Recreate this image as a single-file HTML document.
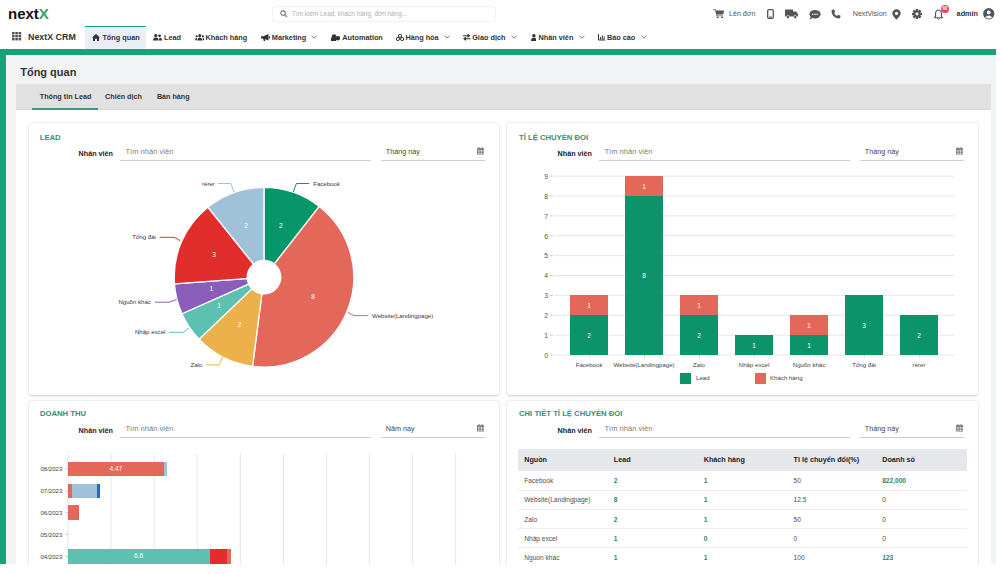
<!DOCTYPE html><html><head><meta charset="utf-8"><style>
html,body{margin:0;padding:0;}
body{width:1000px;height:574px;overflow:hidden;position:relative;background:#fff;font-family:"Liberation Sans",sans-serif;}
.t{position:absolute;white-space:nowrap;line-height:1;}
.r{position:absolute;}
</style></head><body>
<div class="t " style="left:8.00px;top:6.10px;font-size:15px;font-weight:700;color:#111;">next<span style="color:#389e6c">X</span></div>
<div class="r" style="left:271.5px;top:6px;width:224px;height:16px;background:#fff;border:1px solid #f3f3f3;border-radius:3px;box-sizing:border-box;box-shadow:0 0 1px rgba(0,0,0,0.05);"></div>
<svg class="r" style="left:280.3px;top:9.6px" width="7.6" height="7.6" viewBox="0 0 10 10"><circle cx="4" cy="4" r="3" fill="none" stroke="#8a8a8a" stroke-width="1.7"/><path d="M6.2 6.2 L9.2 9.2" stroke="#8a8a8a" stroke-width="2"/></svg>
<div class="t " style="left:292.00px;top:10.78px;font-size:6.4px;font-weight:400;color:#b0b0b0;">Tìm kiếm Lead, khách hàng, đơn hàng...</div>
<svg class="r" style="left:712.5px;top:8.8px" width="11.5" height="9.5" viewBox="0 0 12 10"><path d="M0 0.3 H2.6 L3 1.6 H11.8 L10.6 5.8 H4.2 L4.5 6.8 H10.6 V7.6 H3.8 L2 1.1 H0Z" fill="#555"/><circle cx="4.8" cy="8.9" r="1.05" fill="#555"/><circle cx="9.6" cy="8.9" r="1.05" fill="#555"/></svg>
<div class="t " style="left:729.00px;top:10.99px;font-size:7.1px;font-weight:400;color:#555;">Lên đơn</div>
<svg class="r" style="left:767px;top:8.5px" width="7" height="10" viewBox="0 0 7 10"><rect x="0.7" y="0.7" width="5.6" height="8.6" rx="1" fill="none" stroke="#555" stroke-width="1.3"/><rect x="2" y="7.6" width="3" height="1" fill="#555"/></svg>
<svg class="r" style="left:784.5px;top:9px" width="13" height="10" viewBox="0 0 13 10"><path d="M0 0.5 H8 V7.5 H0 Z M8 2.5 H11 L13 5 V7.5 H8 Z" fill="#555"/><circle cx="3" cy="8" r="1.6" fill="#555" stroke="#fff" stroke-width="0.6"/><circle cx="10.2" cy="8" r="1.6" fill="#555" stroke="#fff" stroke-width="0.6"/></svg>
<svg class="r" style="left:808.5px;top:9.5px" width="12" height="10" viewBox="0 0 12 10"><ellipse cx="6" cy="4.3" rx="5.6" ry="4.2" fill="#555"/><path d="M1.5 7 L0.5 9.8 L4 7.8Z" fill="#555"/><circle cx="3.8" cy="4.3" r="0.8" fill="#fff"/><circle cx="6" cy="4.3" r="0.8" fill="#fff"/><circle cx="8.2" cy="4.3" r="0.8" fill="#fff"/></svg>
<svg class="r" style="left:831px;top:8.5px" width="10" height="10" viewBox="0 0 10 10"><path d="M1.2 0.8 L3.2 0.5 L4.2 3 L3 4 Q4 6.2 6 7 L7 5.8 L9.5 6.8 L9.2 8.8 Q8.5 9.7 7 9.5 Q1 8 0.5 2.5 Q0.5 1.2 1.2 0.8Z" fill="#555"/></svg>
<div class="t " style="left:852.80px;top:10.99px;font-size:7.1px;font-weight:400;color:#555;">NextVision</div>
<svg class="r" style="left:891.5px;top:8.5px" width="9" height="11" viewBox="0 0 9 11"><path d="M4.5 0.3 A4.2 4.2 0 0 1 8.7 4.5 Q8.7 6.5 4.5 10.8 Q0.3 6.5 0.3 4.5 A4.2 4.2 0 0 1 4.5 0.3Z" fill="#555"/><circle cx="4.5" cy="4.4" r="1.6" fill="#fff"/></svg>
<svg class="r" style="left:912px;top:9px" width="10" height="10" viewBox="-5 -5 10 10"><g fill="#555"><rect x="-1.2" y="-5" width="2.4" height="3" transform="rotate(0)"/><rect x="-1.2" y="-5" width="2.4" height="3" transform="rotate(45)"/><rect x="-1.2" y="-5" width="2.4" height="3" transform="rotate(90)"/><rect x="-1.2" y="-5" width="2.4" height="3" transform="rotate(135)"/><rect x="-1.2" y="-5" width="2.4" height="3" transform="rotate(180)"/><rect x="-1.2" y="-5" width="2.4" height="3" transform="rotate(225)"/><rect x="-1.2" y="-5" width="2.4" height="3" transform="rotate(270)"/><rect x="-1.2" y="-5" width="2.4" height="3" transform="rotate(315)"/><circle r="3.4"/></g><circle r="1.4" fill="#fff"/></svg>
<svg class="r" style="left:933.5px;top:8.5px" width="9" height="11" viewBox="0 0 9 11"><path d="M4.5 1 Q7.5 1.3 7.5 5 V7.5 L8.6 8.8 H0.4 L1.5 7.5 V5 Q1.5 1.3 4.5 1Z" fill="none" stroke="#555" stroke-width="1.1"/><path d="M3.3 9.6 Q4.5 11 5.7 9.6" fill="none" stroke="#555" stroke-width="1"/></svg>
<div class="r" style="left:941px;top:5.4px;width:8px;height:8px;border-radius:50%;background:#e8454c;color:#fff;font-size:4.5px;line-height:8px;text-align:center;font-weight:700">60</div>
<div class="t " style="left:956.60px;top:10.12px;font-size:7.3px;font-weight:700;color:#333;">admin</div>
<svg class="r" style="left:983px;top:8.3px" width="11.5" height="11.5" viewBox="0 0 12 12"><circle cx="6" cy="6" r="5.9" fill="#555"/><circle cx="6" cy="4.6" r="2" fill="#fff"/><path d="M2.3 9.6 Q6 6 9.7 9.6 Q6 12.3 2.3 9.6Z" fill="#fff"/></svg>
<svg class="r" style="left:12px;top:32.3px" width="9.5" height="8.5" viewBox="0 0 9.5 8.5"><g fill="#555"><rect x="0.0" y="0" width="2.6" height="2.4"/><rect x="0.0" y="3" width="2.6" height="2.4"/><rect x="0.0" y="6" width="2.6" height="2.4"/><rect x="3.3" y="0" width="2.6" height="2.4"/><rect x="3.3" y="3" width="2.6" height="2.4"/><rect x="3.3" y="6" width="2.6" height="2.4"/><rect x="6.6" y="0" width="2.6" height="2.4"/><rect x="6.6" y="3" width="2.6" height="2.4"/><rect x="6.6" y="6" width="2.6" height="2.4"/></g></svg>
<div class="t " style="left:28.00px;top:32.67px;font-size:8.9px;font-weight:700;color:#333;">NextX CRM</div>
<div class="r" style="left:84.8px;top:25.5px;width:61.2px;height:23.5px;background:#e9eff7;"></div>
<div class="r" style="left:84.8px;top:25.5px;width:61.2px;height:1.8px;background:#16a27b;"></div>
<svg class="r" style="left:92px;top:34px" width="8" height="7" viewBox="0 0 8 7"><path d="M0 3.6 L4 0 L8 3.6 L7 3.6 V7 H5 V4.8 H3 V7 H1 V3.6Z" fill="#333"/></svg>
<div class="t " style="left:102.40px;top:34.12px;font-size:7.3px;font-weight:700;color:#333;">Tổng quan</div>
<svg class="r" style="left:153px;top:34px" width="9" height="6.5" viewBox="0 0 9 6.5"><circle cx="2.8" cy="1.6" r="1.6" fill="#333"/><path d="M0 6.5 Q0 3.6 2.8 3.6 Q5.6 3.6 5.6 6.5Z" fill="#333"/><circle cx="6.6" cy="1.8" r="1.4" fill="#333"/><path d="M6 6.5 Q6 3.8 6.8 3.8 Q9 3.8 9 6.5Z" fill="#333"/></svg>
<div class="t " style="left:164.00px;top:34.12px;font-size:7.3px;font-weight:700;color:#333;">Lead</div>
<svg class="r" style="left:194.6px;top:34px" width="9.5" height="6.5" viewBox="0 0 9.5 6.5"><circle cx="4.75" cy="1.6" r="1.5" fill="#333"/><path d="M2.4 6.5 Q2.4 3.5 4.75 3.5 Q7.1 3.5 7.1 6.5Z" fill="#333"/><circle cx="1.6" cy="2.3" r="1.1" fill="#333"/><path d="M0 6.2 Q0 4 1.9 4 V6.2Z" fill="#333"/><circle cx="7.9" cy="2.3" r="1.1" fill="#333"/><path d="M9.5 6.2 Q9.5 4 7.6 4 V6.2Z" fill="#333"/></svg>
<div class="t " style="left:205.50px;top:34.12px;font-size:7.3px;font-weight:700;color:#333;">Khách hàng</div>
<svg class="r" style="left:261px;top:33.5px" width="9" height="7.5" viewBox="0 0 9 7.5"><path d="M0 2.3 H2.5 L7.5 0 V6.5 L2.5 4.5 H0Z M2 4.6 L3 7.5 H4.3 L3.8 4.8Z" fill="#333"/><rect x="8" y="2.3" width="1" height="2.2" fill="#333"/></svg>
<div class="t " style="left:271.80px;top:34.12px;font-size:7.3px;font-weight:700;color:#333;">Marketing</div>
<svg class="r" style="left:311.2px;top:35.3px" width="6" height="4" viewBox="0 0 6 4"><path d="M0.5 0.7 L3 3.2 L5.5 0.7" fill="none" stroke="#666" stroke-width="0.9"/></svg>
<svg class="r" style="left:330.6px;top:33.8px" width="9.6" height="7" viewBox="0 0 9.6 7"><circle cx="3" cy="2.5" r="2.2" fill="#333"/><circle cx="6.8" cy="4.2" r="2.3" fill="#333"/><rect x="0" y="3.5" width="5" height="3.5" fill="#333"/></svg>
<div class="t " style="left:342.30px;top:34.12px;font-size:7.3px;font-weight:700;color:#333;">Automation</div>
<svg class="r" style="left:396.3px;top:33.8px" width="8" height="7" viewBox="0 0 8 7"><circle cx="4" cy="1.8" r="1.6" fill="none" stroke="#333" stroke-width="1"/><circle cx="1.9" cy="5" r="1.6" fill="none" stroke="#333" stroke-width="1"/><circle cx="6.1" cy="5" r="1.6" fill="none" stroke="#333" stroke-width="1"/></svg>
<div class="t " style="left:405.40px;top:34.12px;font-size:7.3px;font-weight:700;color:#333;">Hàng hóa</div>
<svg class="r" style="left:444px;top:35.3px" width="6" height="4" viewBox="0 0 6 4"><path d="M0.5 0.7 L3 3.2 L5.5 0.7" fill="none" stroke="#666" stroke-width="0.9"/></svg>
<svg class="r" style="left:463px;top:34px" width="7.5" height="6.5" viewBox="0 0 7.5 6.5"><path d="M0 1.8 H6 M4.5 0.3 L6.5 1.8 L4.5 3.3 M7.5 4.7 H1.5 M3 3.2 L1 4.7 L3 6.2" fill="none" stroke="#333" stroke-width="1.1"/></svg>
<div class="t " style="left:472.20px;top:34.12px;font-size:7.3px;font-weight:700;color:#333;">Giao dịch</div>
<svg class="r" style="left:511px;top:35.3px" width="6" height="4" viewBox="0 0 6 4"><path d="M0.5 0.7 L3 3.2 L5.5 0.7" fill="none" stroke="#666" stroke-width="0.9"/></svg>
<svg class="r" style="left:530.7px;top:33.6px" width="5.8" height="7" viewBox="0 0 5.8 7"><circle cx="2.9" cy="1.7" r="1.7" fill="#333"/><path d="M0 7 Q0 3.8 2.9 3.8 Q5.8 3.8 5.8 7Z" fill="#333"/></svg>
<div class="t " style="left:538.50px;top:34.12px;font-size:7.3px;font-weight:700;color:#333;">Nhân viên</div>
<svg class="r" style="left:578.8px;top:35.3px" width="6" height="4" viewBox="0 0 6 4"><path d="M0.5 0.7 L3 3.2 L5.5 0.7" fill="none" stroke="#666" stroke-width="0.9"/></svg>
<svg class="r" style="left:597.8px;top:34px" width="7.5" height="6.5" viewBox="0 0 7.5 6.5"><path d="M0.5 0 V6 H7.5" fill="none" stroke="#333" stroke-width="1"/><rect x="2" y="3" width="1" height="2.5" fill="#333"/><rect x="3.8" y="1.5" width="1" height="4" fill="#333"/><rect x="5.6" y="2.5" width="1" height="3" fill="#333"/></svg>
<div class="t " style="left:606.90px;top:34.12px;font-size:7.3px;font-weight:700;color:#333;">Báo cáo</div>
<svg class="r" style="left:640.5px;top:35.3px" width="6" height="4" viewBox="0 0 6 4"><path d="M0.5 0.7 L3 3.2 L5.5 0.7" fill="none" stroke="#666" stroke-width="0.9"/></svg>
<div class="r" style="left:0px;top:48.8px;width:996px;height:6px;background:#16a27b;"></div>
<div class="r" style="left:0px;top:48.8px;width:5.5px;height:515.4px;background:#16a27b;"></div>
<div class="r" style="left:5.5px;top:54.8px;width:491px;height:509.4px;background:#f2f3f5;border-top-left-radius:6px;width:990.9px"></div>
<div class="t " style="left:20.20px;top:67.49px;font-size:11px;font-weight:700;color:#333;">Tổng quan</div>
<div class="r" style="left:15.7px;top:84.4px;width:975px;height:25.6px;background:#e1e1e1;box-shadow:inset 0 -1.5px 1px rgba(0,0,0,0.03)"></div>
<div class="t " style="left:39.80px;top:93.31px;font-size:7.2px;font-weight:700;color:#333;">Thông tin Lead</div>
<div class="t " style="left:105.10px;top:93.31px;font-size:7.2px;font-weight:700;color:#333;">Chiến dịch</div>
<div class="t " style="left:156.90px;top:93.31px;font-size:7.2px;font-weight:700;color:#333;">Bán hàng</div>
<div class="r" style="left:32px;top:108.3px;width:66px;height:1.7px;background:#3a9882;"></div>
<div class="r" style="left:15.7px;top:110px;width:975px;height:454.2px;background:#fff;"></div>
<div class="r" style="left:28.5px;top:123.3px;width:470.5px;height:271.9px;background:#fff;border-radius:3px;box-shadow:0 0.6px 2.5px rgba(0,0,0,0.22);"></div>
<div class="r" style="left:507.4px;top:123.3px;width:470.6px;height:271.9px;background:#fff;border-radius:3px;box-shadow:0 0.6px 2.5px rgba(0,0,0,0.22);"></div>
<div class="r" style="left:28.5px;top:400.5px;width:470.5px;height:200px;background:#fff;border-radius:3px;box-shadow:0 0.6px 2.5px rgba(0,0,0,0.22);"></div>
<div class="r" style="left:507.4px;top:400.5px;width:470.6px;height:200px;background:#fff;border-radius:3px;box-shadow:0 0.6px 2.5px rgba(0,0,0,0.22);"></div>
<div class="t " style="left:39.70px;top:133.78px;font-size:7.7px;font-weight:700;color:#338f74;">LEAD</div>
<div class="t " style="left:519.00px;top:133.78px;font-size:7.7px;font-weight:700;color:#338f74;">TỈ LỆ CHUYỂN ĐỔI</div>
<div class="t " style="left:39.90px;top:410.28px;font-size:7.7px;font-weight:700;color:#338f74;">DOANH THU</div>
<div class="t " style="left:519.00px;top:410.28px;font-size:7.7px;font-weight:700;color:#338f74;">CHI TIẾT TỈ LỆ CHUYỂN ĐỔI</div>
<div class="t " style="left:78.60px;top:150.31px;font-size:7.2px;font-weight:700;color:#222;">Nhân viên</div>
<div class="t " style="left:125.40px;top:147.77px;font-size:7.6px;font-weight:400;color:#7d7d7d;">Tìm nhân viên</div>
<div class="r" style="left:119.8px;top:159.6px;width:251.4px;height:0.9px;background:#cfcfcf;"></div>
<div class="t " style="left:385.80px;top:147.81px;font-size:7.2px;font-weight:400;color:#444;">Tháng này</div>
<div class="r" style="left:381px;top:159.6px;width:103.5px;height:0.9px;background:#cfcfcf;"></div>
<svg class="r" style="left:477px;top:147px" width="7" height="7.5" viewBox="0 0 7 7.5"><path d="M0 1.2 H7 V7.5 H0Z" fill="#777"/><rect x="1.5" y="0" width="1" height="1.5" fill="#777"/><rect x="4.5" y="0" width="1" height="1.5" fill="#777"/><g fill="#fff"><rect x="0.8" y="2.9" width="1" height="0.9"/><rect x="0.8" y="4.4" width="1" height="0.9"/><rect x="0.8" y="5.9" width="1" height="0.9"/><rect x="2.4000000000000004" y="2.9" width="1" height="0.9"/><rect x="2.4000000000000004" y="4.4" width="1" height="0.9"/><rect x="2.4000000000000004" y="5.9" width="1" height="0.9"/><rect x="4.0" y="2.9" width="1" height="0.9"/><rect x="4.0" y="4.4" width="1" height="0.9"/><rect x="4.0" y="5.9" width="1" height="0.9"/><rect x="5.6000000000000005" y="2.9" width="1" height="0.9"/><rect x="5.6000000000000005" y="4.4" width="1" height="0.9"/><rect x="5.6000000000000005" y="5.9" width="1" height="0.9"/></g></svg>
<div class="t " style="left:557.60px;top:150.31px;font-size:7.2px;font-weight:700;color:#222;">Nhân viên</div>
<div class="t " style="left:604.40px;top:147.77px;font-size:7.6px;font-weight:400;color:#7d7d7d;">Tìm nhân viên</div>
<div class="r" style="left:598.8px;top:159.6px;width:251.4px;height:0.9px;background:#cfcfcf;"></div>
<div class="t " style="left:864.80px;top:147.81px;font-size:7.2px;font-weight:400;color:#444;">Tháng này</div>
<div class="r" style="left:860px;top:159.6px;width:103.5px;height:0.9px;background:#cfcfcf;"></div>
<svg class="r" style="left:956px;top:147px" width="7" height="7.5" viewBox="0 0 7 7.5"><path d="M0 1.2 H7 V7.5 H0Z" fill="#777"/><rect x="1.5" y="0" width="1" height="1.5" fill="#777"/><rect x="4.5" y="0" width="1" height="1.5" fill="#777"/><g fill="#fff"><rect x="0.8" y="2.9" width="1" height="0.9"/><rect x="0.8" y="4.4" width="1" height="0.9"/><rect x="0.8" y="5.9" width="1" height="0.9"/><rect x="2.4000000000000004" y="2.9" width="1" height="0.9"/><rect x="2.4000000000000004" y="4.4" width="1" height="0.9"/><rect x="2.4000000000000004" y="5.9" width="1" height="0.9"/><rect x="4.0" y="2.9" width="1" height="0.9"/><rect x="4.0" y="4.4" width="1" height="0.9"/><rect x="4.0" y="5.9" width="1" height="0.9"/><rect x="5.6000000000000005" y="2.9" width="1" height="0.9"/><rect x="5.6000000000000005" y="4.4" width="1" height="0.9"/><rect x="5.6000000000000005" y="5.9" width="1" height="0.9"/></g></svg>
<div class="t " style="left:78.60px;top:427.31px;font-size:7.2px;font-weight:700;color:#222;">Nhân viên</div>
<div class="t " style="left:125.40px;top:424.77px;font-size:7.6px;font-weight:400;color:#7d7d7d;">Tìm nhân viên</div>
<div class="r" style="left:119.8px;top:436.6px;width:251.4px;height:0.9px;background:#cfcfcf;"></div>
<div class="t " style="left:385.80px;top:424.81px;font-size:7.2px;font-weight:400;color:#444;">Năm nay</div>
<div class="r" style="left:381px;top:436.6px;width:103.5px;height:0.9px;background:#cfcfcf;"></div>
<svg class="r" style="left:477px;top:424px" width="7" height="7.5" viewBox="0 0 7 7.5"><path d="M0 1.2 H7 V7.5 H0Z" fill="#777"/><rect x="1.5" y="0" width="1" height="1.5" fill="#777"/><rect x="4.5" y="0" width="1" height="1.5" fill="#777"/><g fill="#fff"><rect x="0.8" y="2.9" width="1" height="0.9"/><rect x="0.8" y="4.4" width="1" height="0.9"/><rect x="0.8" y="5.9" width="1" height="0.9"/><rect x="2.4000000000000004" y="2.9" width="1" height="0.9"/><rect x="2.4000000000000004" y="4.4" width="1" height="0.9"/><rect x="2.4000000000000004" y="5.9" width="1" height="0.9"/><rect x="4.0" y="2.9" width="1" height="0.9"/><rect x="4.0" y="4.4" width="1" height="0.9"/><rect x="4.0" y="5.9" width="1" height="0.9"/><rect x="5.6000000000000005" y="2.9" width="1" height="0.9"/><rect x="5.6000000000000005" y="4.4" width="1" height="0.9"/><rect x="5.6000000000000005" y="5.9" width="1" height="0.9"/></g></svg>
<div class="t " style="left:557.60px;top:427.31px;font-size:7.2px;font-weight:700;color:#222;">Nhân viên</div>
<div class="t " style="left:604.40px;top:424.77px;font-size:7.6px;font-weight:400;color:#7d7d7d;">Tìm nhân viên</div>
<div class="r" style="left:598.8px;top:436.6px;width:251.4px;height:0.9px;background:#cfcfcf;"></div>
<div class="t " style="left:864.80px;top:424.81px;font-size:7.2px;font-weight:400;color:#444;">Tháng này</div>
<div class="r" style="left:860px;top:436.6px;width:103.5px;height:0.9px;background:#cfcfcf;"></div>
<svg class="r" style="left:956px;top:424px" width="7" height="7.5" viewBox="0 0 7 7.5"><path d="M0 1.2 H7 V7.5 H0Z" fill="#777"/><rect x="1.5" y="0" width="1" height="1.5" fill="#777"/><rect x="4.5" y="0" width="1" height="1.5" fill="#777"/><g fill="#fff"><rect x="0.8" y="2.9" width="1" height="0.9"/><rect x="0.8" y="4.4" width="1" height="0.9"/><rect x="0.8" y="5.9" width="1" height="0.9"/><rect x="2.4000000000000004" y="2.9" width="1" height="0.9"/><rect x="2.4000000000000004" y="4.4" width="1" height="0.9"/><rect x="2.4000000000000004" y="5.9" width="1" height="0.9"/><rect x="4.0" y="2.9" width="1" height="0.9"/><rect x="4.0" y="4.4" width="1" height="0.9"/><rect x="4.0" y="5.9" width="1" height="0.9"/><rect x="5.6000000000000005" y="2.9" width="1" height="0.9"/><rect x="5.6000000000000005" y="4.4" width="1" height="0.9"/><rect x="5.6000000000000005" y="5.9" width="1" height="0.9"/></g></svg>
<svg class="r" style="left:0;top:0" width="1000" height="574" viewBox="0 0 1000 574"><path d="M264.00 277.20 L264.00 187.40 A89.8 89.8 0 0 1 319.29 206.44 Z" fill="#079669" stroke="#fff" stroke-width="1.3" stroke-linejoin="round"/><path d="M264.00 277.20 L319.29 206.44 A89.8 89.8 0 0 1 252.59 366.27 Z" fill="#e4685a" stroke="#fff" stroke-width="1.3" stroke-linejoin="round"/><path d="M264.00 277.20 L252.59 366.27 A89.8 89.8 0 0 1 199.08 339.24 Z" fill="#ecb14b" stroke="#fff" stroke-width="1.3" stroke-linejoin="round"/><path d="M264.00 277.20 L199.08 339.24 A89.8 89.8 0 0 1 181.96 313.72 Z" fill="#5cc1b0" stroke="#fff" stroke-width="1.3" stroke-linejoin="round"/><path d="M264.00 277.20 L181.96 313.72 A89.8 89.8 0 0 1 174.44 283.78 Z" fill="#8a5dbb" stroke="#fff" stroke-width="1.3" stroke-linejoin="round"/><path d="M264.00 277.20 L174.44 283.78 A89.8 89.8 0 0 1 207.85 207.12 Z" fill="#e22d2d" stroke="#fff" stroke-width="1.3" stroke-linejoin="round"/><path d="M264.00 277.20 L207.85 207.12 A89.8 89.8 0 0 1 264.00 187.40 Z" fill="#9fc2d9" stroke="#fff" stroke-width="1.3" stroke-linejoin="round"/><circle cx="264.0" cy="277.2" r="17.4" fill="#fff"/><path d="M293.2 192.0 L296.4 183.5 L309.2 183.5" fill="none" stroke="#079669" stroke-width="1"/><path d="M234.0 192.0 L230.8 183.5 L218.0 183.5" fill="none" stroke="#9fc2d9" stroke-width="1"/><path d="M180.1 240.7 L174.1 237.3 L159.7 237.3" fill="none" stroke="#e22d2d" stroke-width="1"/><path d="M176.7 299.6 L168.9 302.2 L155.0 302.2" fill="none" stroke="#8a5dbb" stroke-width="1"/><path d="M188.5 328.3 L183.3 332.3 L168.9 332.3" fill="none" stroke="#5cc1b0" stroke-width="1"/><path d="M223.1 356.1 L219.2 364.9 L206.1 364.9" fill="none" stroke="#ecb14b" stroke-width="1"/><path d="M348.0 312.4 L354.0 315.6 L368.4 315.6" fill="none" stroke="#e4685a" stroke-width="1"/><line x1="554.5" y1="355.00" x2="954.4" y2="355.00" stroke="#e6e6e6" stroke-width="1"/><line x1="550" y1="355.00" x2="553" y2="355.00" stroke="#bbb" stroke-width="0.8"/><line x1="554.5" y1="335.13" x2="954.4" y2="335.13" stroke="#e6e6e6" stroke-width="1"/><line x1="550" y1="335.13" x2="553" y2="335.13" stroke="#bbb" stroke-width="0.8"/><line x1="554.5" y1="315.26" x2="954.4" y2="315.26" stroke="#e6e6e6" stroke-width="1"/><line x1="550" y1="315.26" x2="553" y2="315.26" stroke="#bbb" stroke-width="0.8"/><line x1="554.5" y1="295.39" x2="954.4" y2="295.39" stroke="#e6e6e6" stroke-width="1"/><line x1="550" y1="295.39" x2="553" y2="295.39" stroke="#bbb" stroke-width="0.8"/><line x1="554.5" y1="275.52" x2="954.4" y2="275.52" stroke="#e6e6e6" stroke-width="1"/><line x1="550" y1="275.52" x2="553" y2="275.52" stroke="#bbb" stroke-width="0.8"/><line x1="554.5" y1="255.65" x2="954.4" y2="255.65" stroke="#e6e6e6" stroke-width="1"/><line x1="550" y1="255.65" x2="553" y2="255.65" stroke="#bbb" stroke-width="0.8"/><line x1="554.5" y1="235.78" x2="954.4" y2="235.78" stroke="#e6e6e6" stroke-width="1"/><line x1="550" y1="235.78" x2="553" y2="235.78" stroke="#bbb" stroke-width="0.8"/><line x1="554.5" y1="215.91" x2="954.4" y2="215.91" stroke="#e6e6e6" stroke-width="1"/><line x1="550" y1="215.91" x2="553" y2="215.91" stroke="#bbb" stroke-width="0.8"/><line x1="554.5" y1="196.04" x2="954.4" y2="196.04" stroke="#e6e6e6" stroke-width="1"/><line x1="550" y1="196.04" x2="553" y2="196.04" stroke="#bbb" stroke-width="0.8"/><line x1="554.5" y1="176.17" x2="954.4" y2="176.17" stroke="#e6e6e6" stroke-width="1"/><line x1="550" y1="176.17" x2="553" y2="176.17" stroke="#bbb" stroke-width="0.8"/></svg>
<div class="t " style="right:452.00px;top:352.84px;font-size:6.8px;font-weight:400;color:#555;">0</div>
<div class="t " style="right:452.00px;top:332.97px;font-size:6.8px;font-weight:400;color:#555;">1</div>
<div class="t " style="right:452.00px;top:313.10px;font-size:6.8px;font-weight:400;color:#555;">2</div>
<div class="t " style="right:452.00px;top:293.23px;font-size:6.8px;font-weight:400;color:#555;">3</div>
<div class="t " style="right:452.00px;top:273.36px;font-size:6.8px;font-weight:400;color:#555;">4</div>
<div class="t " style="right:452.00px;top:253.49px;font-size:6.8px;font-weight:400;color:#555;">5</div>
<div class="t " style="right:452.00px;top:233.62px;font-size:6.8px;font-weight:400;color:#555;">6</div>
<div class="t " style="right:452.00px;top:213.75px;font-size:6.8px;font-weight:400;color:#555;">7</div>
<div class="t " style="right:452.00px;top:193.88px;font-size:6.8px;font-weight:400;color:#555;">8</div>
<div class="t " style="right:452.00px;top:174.01px;font-size:6.8px;font-weight:400;color:#555;">9</div>
<div class="r" style="left:569.9px;top:315.26px;width:38.3px;height:39.74px;background:#0d936a;"></div>
<div class="t " style="left:589.05px;transform:translateX(-50%);top:332.74px;font-size:6.6px;font-weight:400;color:#fff;">2</div>
<div class="r" style="left:569.9px;top:295.39px;width:38.3px;height:19.87px;background:#e4685a;"></div>
<div class="t " style="left:589.05px;transform:translateX(-50%);top:302.94px;font-size:6.6px;font-weight:400;color:#fff;">1</div>
<div class="t " style="left:589.05px;transform:translateX(-50%);top:361.94px;font-size:6.1px;font-weight:400;color:#444;">Facebook</div>
<div class="r" style="left:588.65px;top:355.3px;width:0.8px;height:2.5px;background:#dcdcdc;"></div>
<div class="r" style="left:624.9px;top:196.04px;width:38.3px;height:158.96px;background:#0d936a;"></div>
<div class="t " style="left:644.05px;transform:translateX(-50%);top:273.13px;font-size:6.6px;font-weight:400;color:#fff;">8</div>
<div class="r" style="left:624.9px;top:176.17px;width:38.3px;height:19.87px;background:#e4685a;"></div>
<div class="t " style="left:644.05px;transform:translateX(-50%);top:183.72px;font-size:6.6px;font-weight:400;color:#fff;">1</div>
<div class="t " style="left:644.05px;transform:translateX(-50%);top:361.94px;font-size:6.1px;font-weight:400;color:#444;">Website(Landingpage)</div>
<div class="r" style="left:643.65px;top:355.3px;width:0.8px;height:2.5px;background:#dcdcdc;"></div>
<div class="r" style="left:679.9px;top:315.26px;width:38.3px;height:39.74px;background:#0d936a;"></div>
<div class="t " style="left:699.05px;transform:translateX(-50%);top:332.74px;font-size:6.6px;font-weight:400;color:#fff;">2</div>
<div class="r" style="left:679.9px;top:295.39px;width:38.3px;height:19.87px;background:#e4685a;"></div>
<div class="t " style="left:699.05px;transform:translateX(-50%);top:302.94px;font-size:6.6px;font-weight:400;color:#fff;">1</div>
<div class="t " style="left:699.05px;transform:translateX(-50%);top:361.94px;font-size:6.1px;font-weight:400;color:#444;">Zalo</div>
<div class="r" style="left:698.65px;top:355.3px;width:0.8px;height:2.5px;background:#dcdcdc;"></div>
<div class="r" style="left:734.9px;top:335.13px;width:38.3px;height:19.87px;background:#0d936a;"></div>
<div class="t " style="left:754.05px;transform:translateX(-50%);top:342.68px;font-size:6.6px;font-weight:400;color:#fff;">1</div>
<div class="t " style="left:754.05px;transform:translateX(-50%);top:361.94px;font-size:6.1px;font-weight:400;color:#444;">Nhập excel</div>
<div class="r" style="left:753.65px;top:355.3px;width:0.8px;height:2.5px;background:#dcdcdc;"></div>
<div class="r" style="left:789.9px;top:335.13px;width:38.3px;height:19.87px;background:#0d936a;"></div>
<div class="t " style="left:809.05px;transform:translateX(-50%);top:342.68px;font-size:6.6px;font-weight:400;color:#fff;">1</div>
<div class="r" style="left:789.9px;top:315.26px;width:38.3px;height:19.87px;background:#e4685a;"></div>
<div class="t " style="left:809.05px;transform:translateX(-50%);top:322.81px;font-size:6.6px;font-weight:400;color:#fff;">1</div>
<div class="t " style="left:809.05px;transform:translateX(-50%);top:361.94px;font-size:6.1px;font-weight:400;color:#444;">Nguồn khác</div>
<div class="r" style="left:808.65px;top:355.3px;width:0.8px;height:2.5px;background:#dcdcdc;"></div>
<div class="r" style="left:844.9px;top:295.39px;width:38.3px;height:59.61px;background:#0d936a;"></div>
<div class="t " style="left:864.05px;transform:translateX(-50%);top:322.81px;font-size:6.6px;font-weight:400;color:#fff;">3</div>
<div class="t " style="left:864.05px;transform:translateX(-50%);top:361.94px;font-size:6.1px;font-weight:400;color:#444;">Tổng đài</div>
<div class="r" style="left:863.65px;top:355.3px;width:0.8px;height:2.5px;background:#dcdcdc;"></div>
<div class="r" style="left:899.9px;top:315.26px;width:38.3px;height:39.74px;background:#0d936a;"></div>
<div class="t " style="left:919.05px;transform:translateX(-50%);top:332.74px;font-size:6.6px;font-weight:400;color:#fff;">2</div>
<div class="t " style="left:919.05px;transform:translateX(-50%);top:361.94px;font-size:6.1px;font-weight:400;color:#444;">rērer</div>
<div class="r" style="left:918.65px;top:355.3px;width:0.8px;height:2.5px;background:#dcdcdc;"></div>
<div class="r" style="left:680.2px;top:372.5px;width:11.3px;height:11.3px;background:#0d936a;"></div>
<div class="t " style="left:696.00px;top:375.34px;font-size:6.1px;font-weight:400;color:#444;">Lead</div>
<div class="r" style="left:754.5px;top:372.5px;width:11.3px;height:11.3px;background:#e4685a;"></div>
<div class="t " style="left:770.00px;top:375.34px;font-size:6.1px;font-weight:400;color:#444;">Khách hàng</div>
<div class="t " style="left:313.20px;top:181.04px;font-size:6.1px;font-weight:400;color:#383838;">Facebook</div>
<div class="t " style="left:202.00px;top:181.04px;font-size:6.1px;font-weight:400;color:#383838;">rērer</div>
<div class="t " style="left:132.20px;top:234.34px;font-size:6.1px;font-weight:400;color:#383838;">Tổng đài</div>
<div class="t " style="left:118.40px;top:299.24px;font-size:6.1px;font-weight:400;color:#383838;">Nguồn khác</div>
<div class="t " style="left:134.90px;top:329.34px;font-size:6.1px;font-weight:400;color:#383838;">Nhập excel</div>
<div class="t " style="left:190.50px;top:361.94px;font-size:6.1px;font-weight:400;color:#383838;">Zalo</div>
<div class="t " style="left:372.00px;top:312.64px;font-size:6.1px;font-weight:400;color:#383838;">Website(Landingpage)</div>
<div class="t " style="left:280.90px;transform:translateX(-50%);top:223.11px;font-size:6.6px;font-weight:400;color:#fff;">2</div>
<div class="t " style="left:246.10px;transform:translateX(-50%);top:223.11px;font-size:6.6px;font-weight:400;color:#fff;">2</div>
<div class="t " style="left:214.00px;transform:translateX(-50%);top:252.31px;font-size:6.6px;font-weight:400;color:#fff;">3</div>
<div class="t " style="left:211.40px;transform:translateX(-50%);top:286.01px;font-size:6.6px;font-weight:400;color:#fff;">1</div>
<div class="t " style="left:219.00px;transform:translateX(-50%);top:303.31px;font-size:6.6px;font-weight:400;color:#fff;">1</div>
<div class="t " style="left:239.50px;transform:translateX(-50%);top:322.41px;font-size:6.6px;font-weight:400;color:#fff;">2</div>
<div class="t " style="left:313.00px;transform:translateX(-50%);top:294.31px;font-size:6.6px;font-weight:400;color:#fff;">8</div>
<svg class="r" style="left:0;top:0" width="1000" height="574" viewBox="0 0 1000 574"><line x1="68.00" y1="453.7" x2="68.00" y2="574" stroke="#e6e6e6" stroke-width="1"/><line x1="111.07" y1="453.7" x2="111.07" y2="574" stroke="#e6e6e6" stroke-width="1"/><line x1="154.14" y1="453.7" x2="154.14" y2="574" stroke="#e6e6e6" stroke-width="1"/><line x1="197.21" y1="453.7" x2="197.21" y2="574" stroke="#e6e6e6" stroke-width="1"/><line x1="240.28" y1="453.7" x2="240.28" y2="574" stroke="#e6e6e6" stroke-width="1"/><line x1="283.35" y1="453.7" x2="283.35" y2="574" stroke="#e6e6e6" stroke-width="1"/><line x1="326.42" y1="453.7" x2="326.42" y2="574" stroke="#e6e6e6" stroke-width="1"/><line x1="369.49" y1="453.7" x2="369.49" y2="574" stroke="#e6e6e6" stroke-width="1"/><line x1="412.56" y1="453.7" x2="412.56" y2="574" stroke="#e6e6e6" stroke-width="1"/><line x1="455.63" y1="453.7" x2="455.63" y2="574" stroke="#e6e6e6" stroke-width="1"/><line x1="65.5" y1="469" x2="68" y2="469" stroke="#bbb" stroke-width="0.8"/><line x1="65.5" y1="491" x2="68" y2="491" stroke="#bbb" stroke-width="0.8"/><line x1="65.5" y1="512.6" x2="68" y2="512.6" stroke="#bbb" stroke-width="0.8"/><line x1="65.5" y1="534.5" x2="68" y2="534.5" stroke="#bbb" stroke-width="0.8"/><line x1="65.5" y1="556.4" x2="68" y2="556.4" stroke="#bbb" stroke-width="0.8"/></svg>
<div class="t " style="right:937.60px;top:466.14px;font-size:6.1px;font-weight:400;color:#444;">08/2023</div>
<div class="t " style="right:937.60px;top:488.14px;font-size:6.1px;font-weight:400;color:#444;">07/2023</div>
<div class="t " style="right:937.60px;top:509.74px;font-size:6.1px;font-weight:400;color:#444;">06/2023</div>
<div class="t " style="right:937.60px;top:531.64px;font-size:6.1px;font-weight:400;color:#444;">05/2023</div>
<div class="t " style="right:937.60px;top:553.54px;font-size:6.1px;font-weight:400;color:#444;">04/2023</div>
<div class="r" style="left:68px;top:461.75px;width:96.4px;height:14.5px;background:#e4685a;"></div>
<div class="r" style="left:164.4px;top:461.75px;width:3.1px;height:14.5px;background:#9fc2d9;"></div>
<div class="t " style="left:116.00px;transform:translateX(-50%);top:465.81px;font-size:6.6px;font-weight:400;color:#fff;">4.47</div>
<div class="r" style="left:68px;top:483.75px;width:4.2px;height:14.5px;background:#e4685a;"></div>
<div class="r" style="left:72.2px;top:483.75px;width:24.7px;height:14.5px;background:#9fc2d9;"></div>
<div class="r" style="left:96.9px;top:483.75px;width:3.3px;height:14.5px;background:#1a6fc0;"></div>
<div class="r" style="left:68px;top:505.35px;width:11.4px;height:14.5px;background:#e4685a;"></div>
<div class="r" style="left:68px;top:549.15px;width:141.5px;height:14.5px;background:#5cc1b0;"></div>
<div class="r" style="left:209.5px;top:549.15px;width:17.5px;height:14.5px;background:#e22d2d;"></div>
<div class="r" style="left:227px;top:549.15px;width:3.5px;height:14.5px;background:#e4685a;"></div>
<div class="t " style="left:138.70px;transform:translateX(-50%);top:553.21px;font-size:6.6px;font-weight:400;color:#fff;">6.6</div>
<div class="r" style="left:518px;top:448.75px;width:448.5px;height:21.75px;background:#e6e7ea;"></div>
<div class="t " style="left:524.25px;top:455.71px;font-size:7.2px;font-weight:700;color:#222;">Nguồn</div>
<div class="t " style="left:613.75px;top:455.71px;font-size:7.2px;font-weight:700;color:#222;">Lead</div>
<div class="t " style="left:703.75px;top:455.71px;font-size:7.2px;font-weight:700;color:#222;">Khách hàng</div>
<div class="t " style="left:793.60px;top:455.71px;font-size:7.2px;font-weight:700;color:#222;">Tỉ lệ chuyển đổi(%)</div>
<div class="t " style="left:882.20px;top:455.71px;font-size:7.2px;font-weight:700;color:#222;">Doanh số</div>
<div class="r" style="left:518px;top:489.5px;width:448.5px;height:0.8px;background:#efefef;"></div>
<div class="t " style="left:524.25px;top:478.06px;font-size:6.6px;font-weight:400;color:#505050;">Facebook</div>
<div class="t " style="left:613.75px;top:478.06px;font-size:6.6px;font-weight:700;color:#1d8a6a;">2</div>
<div class="t " style="left:703.75px;top:478.06px;font-size:6.6px;font-weight:700;color:#1d8a6a;">1</div>
<div class="t " style="left:793.60px;top:478.06px;font-size:6.6px;font-weight:400;color:#505050;">50</div>
<div class="t " style="left:882.20px;top:478.06px;font-size:6.6px;font-weight:700;color:#1d8a6a;">822,000</div>
<div class="r" style="left:518px;top:508.75px;width:448.5px;height:0.8px;background:#efefef;"></div>
<div class="t " style="left:524.25px;top:497.44px;font-size:6.6px;font-weight:400;color:#505050;">Website(Landingpage)</div>
<div class="t " style="left:613.75px;top:497.44px;font-size:6.6px;font-weight:700;color:#1d8a6a;">8</div>
<div class="t " style="left:703.75px;top:497.44px;font-size:6.6px;font-weight:700;color:#1d8a6a;">1</div>
<div class="t " style="left:793.60px;top:497.44px;font-size:6.6px;font-weight:400;color:#505050;">12.5</div>
<div class="t " style="left:882.20px;top:497.44px;font-size:6.6px;font-weight:400;color:#505050;">0</div>
<div class="r" style="left:518px;top:527.75px;width:448.5px;height:0.8px;background:#efefef;"></div>
<div class="t " style="left:524.25px;top:516.56px;font-size:6.6px;font-weight:400;color:#505050;">Zalo</div>
<div class="t " style="left:613.75px;top:516.56px;font-size:6.6px;font-weight:700;color:#1d8a6a;">2</div>
<div class="t " style="left:703.75px;top:516.56px;font-size:6.6px;font-weight:700;color:#1d8a6a;">1</div>
<div class="t " style="left:793.60px;top:516.56px;font-size:6.6px;font-weight:400;color:#505050;">50</div>
<div class="t " style="left:882.20px;top:516.56px;font-size:6.6px;font-weight:400;color:#505050;">0</div>
<div class="r" style="left:518px;top:547.0px;width:448.5px;height:0.8px;background:#efefef;"></div>
<div class="t " style="left:524.25px;top:535.69px;font-size:6.6px;font-weight:400;color:#505050;">Nhập excel</div>
<div class="t " style="left:613.75px;top:535.69px;font-size:6.6px;font-weight:700;color:#1d8a6a;">1</div>
<div class="t " style="left:703.75px;top:535.69px;font-size:6.6px;font-weight:700;color:#1d8a6a;">0</div>
<div class="t " style="left:793.60px;top:535.69px;font-size:6.6px;font-weight:400;color:#505050;">0</div>
<div class="t " style="left:882.20px;top:535.69px;font-size:6.6px;font-weight:400;color:#505050;">0</div>
<div class="r" style="left:518px;top:566.0px;width:448.5px;height:0.8px;background:#efefef;"></div>
<div class="t " style="left:524.25px;top:554.81px;font-size:6.6px;font-weight:400;color:#505050;">Nguồn khác</div>
<div class="t " style="left:613.75px;top:554.81px;font-size:6.6px;font-weight:700;color:#1d8a6a;">1</div>
<div class="t " style="left:703.75px;top:554.81px;font-size:6.6px;font-weight:700;color:#1d8a6a;">1</div>
<div class="t " style="left:793.60px;top:554.81px;font-size:6.6px;font-weight:400;color:#505050;">100</div>
<div class="t " style="left:882.20px;top:554.81px;font-size:6.6px;font-weight:700;color:#1d8a6a;">123</div>
<div class="r" style="left:0px;top:564.8px;width:1000px;height:10px;background:#fff;"></div>
<div class="r" style="left:996.4px;top:0px;width:4px;height:574px;background:#fff;"></div>
</body></html>
